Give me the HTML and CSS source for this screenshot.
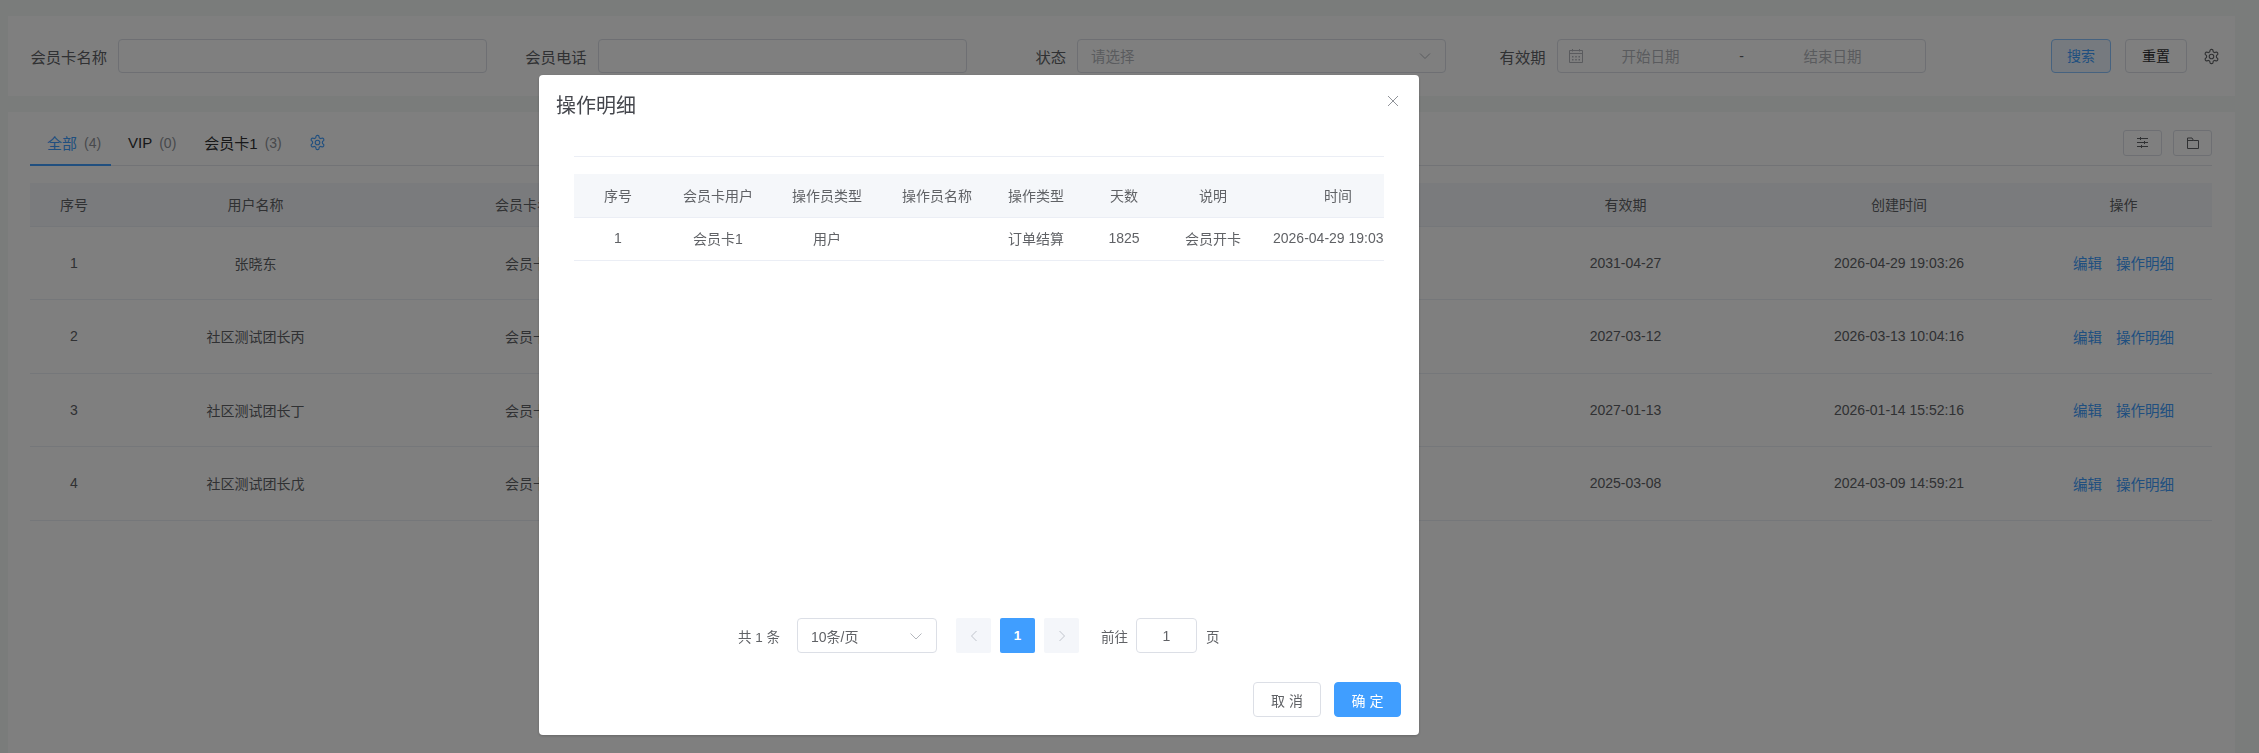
FILE: index.html
```html
<!DOCTYPE html>
<html lang="zh-CN">
<head>
  <meta charset="UTF-8">
  <meta name="viewport" content="width=device-width, initial-scale=1.0">
  <title>会员卡管理</title>
  <link rel="stylesheet" href="styles.css">
</head>
<body>
  <div class="page">
    <form class="card search">
      <div class="field">
        <label class="field-label">会员卡名称</label>
        <div class="input"></div>
      </div>
      <div class="field">
        <label class="field-label">会员电话</label>
        <div class="input"></div>
      </div>
      <div class="field">
        <label class="field-label">状态</label>
        <div class="input select">
          <span class="placeholder">请选择</span>
          <svg class="arrow" width="14" height="14" viewBox="0 0 14 14"><path d="M2 4.500l5 5 5-5" fill="none" stroke="currentColor"/></svg>
        </div>
      </div>
      <div class="field">
        <label class="field-label">有效期</label>
        <div class="input date">
          <svg class="date-icon" width="14" height="14" viewBox="0 0 14 14"><path d="M.5 1.500h13v12H.5zM.5 4.500h13M3.500 0v2.500M10.500 0v2.500" fill="none" stroke="currentColor"/><path d="M3 7h1.500v1.500H3zM6.250 7h1.500v1.500h-1.500zM9.500 7H11v1.500H9.500zM3 10h1.500v1.500H3zM6.250 10h1.500v1.500h-1.500zM9.500 10H11v1.500H9.500z" fill="currentColor"/></svg>
          <span class="placeholder date-part date-start">开始日期</span>
          <span class="date-dash">-</span>
          <span class="placeholder date-part">结束日期</span>
        </div>
      </div>
      <div class="search-actions">
        <button type="button" class="btn btn-search">搜索</button>
        <button type="button" class="btn btn-reset">重置</button>
        <svg class="gear gear-dark" width="17" height="17" viewBox="0 0 24 24"><path d="M12.220 2h-.44a2 2 0 0 0-2 2v.18a2 2 0 0 1-1 1.730l-.43.25a2 2 0 0 1-2 0l-.15-.08a2 2 0 0 0-2.730.73l-.22.38a2 2 0 0 0 .73 2.730l.15.1a2 2 0 0 1 1 1.720v.51a2 2 0 0 1-1 1.740l-.15.09a2 2 0 0 0-.73 2.730l.22.38a2 2 0 0 0 2.730.73l.15-.08a2 2 0 0 1 2 0l.43.25a2 2 0 0 1 1 1.730V20a2 2 0 0 0 2 2h.44a2 2 0 0 0 2-2v-.18a2 2 0 0 1 1-1.730l.43-.25a2 2 0 0 1 2 0l.15.08a2 2 0 0 0 2.730-.73l.22-.39a2 2 0 0 0-.73-2.730l-.15-.08a2 2 0 0 1-1-1.740v-.5a2 2 0 0 1 1-1.740l.15-.09a2 2 0 0 0 .73-2.730l-.22-.38a2 2 0 0 0-2.730-.73l-.15.08a2 2 0 0 1-2 0l-.43-.25a2 2 0 0 1-1-1.730V4a2 2 0 0 0-2-2z" fill="none" stroke="currentColor" stroke-width="1.600"/><circle cx="12" cy="12" r="3.200" fill="none" stroke="currentColor" stroke-width="1.600"/></svg>
      </div>
    </form>

    <div class="card list">
      <div class="tabs-bar">
        <a class="tab active">全部<span class="count">(4)</span></a>
        <a class="tab">VIP<span class="count">(0)</span></a>
        <a class="tab">会员卡1<span class="count">(3)</span></a>
        <svg class="gear gear-blue" width="17" height="17" viewBox="0 0 24 24"><path d="M12.220 2h-.44a2 2 0 0 0-2 2v.18a2 2 0 0 1-1 1.730l-.43.25a2 2 0 0 1-2 0l-.15-.08a2 2 0 0 0-2.730.73l-.22.38a2 2 0 0 0 .73 2.730l.15.1a2 2 0 0 1 1 1.720v.51a2 2 0 0 1-1 1.740l-.15.09a2 2 0 0 0-.73 2.730l.22.38a2 2 0 0 0 2.730.73l.15-.08a2 2 0 0 1 2 0l.43.25a2 2 0 0 1 1 1.730V20a2 2 0 0 0 2 2h.44a2 2 0 0 0 2-2v-.18a2 2 0 0 1 1-1.730l.43-.25a2 2 0 0 1 2 0l.15.08a2 2 0 0 0 2.730-.73l.22-.39a2 2 0 0 0-.73-2.730l-.15-.08a2 2 0 0 1-1-1.740v-.5a2 2 0 0 1 1-1.740l.15-.09a2 2 0 0 0 .73-2.730l-.22-.38a2 2 0 0 0-2.730-.73l-.15.08a2 2 0 0 1-2 0l-.43-.25a2 2 0 0 1-1-1.730V4a2 2 0 0 0-2-2z" fill="none" stroke="currentColor" stroke-width="1.600"/><circle cx="12" cy="12" r="3.200" fill="none" stroke="currentColor" stroke-width="1.600"/></svg>
        <div class="tools">
          <button type="button" class="tool">
            <svg width="11" height="11" viewBox="0 0 11 11"><path d="M0 1.500h11M0 5.500h11M0 9.500h11M3.500 0v3M7.500 4v3M4.500 8v3" fill="none" stroke="currentColor"/></svg>
          </button>
          <button type="button" class="tool">
            <svg width="12" height="12" viewBox="0 0 12 12"><path d="M.5 1h4.500l1.500 2.500h5v8H.5zM.5 3.500h6" fill="none" stroke="currentColor"/></svg>
          </button>
        </div>
      </div>

      <table class="table main-table">
        <colgroup>
          <col class="c-no"><col class="c-user"><col class="c-card"><col class="c-hidden"><col class="c-valid"><col class="c-created"><col class="c-op">
        </colgroup>
        <thead>
          <tr><th>序号</th><th>用户名称</th><th>会员卡名称</th><th></th><th>有效期</th><th>创建时间</th><th>操作</th></tr>
        </thead>
        <tbody>
          <tr><td>1</td><td>张晓东</td><td>会员卡1</td><td></td><td>2031-04-27</td><td>2026-04-29 19:03:26</td><td><a class="link">编辑</a><a class="link">操作明细</a></td></tr>
          <tr><td>2</td><td>社区测试团长丙</td><td>会员卡1</td><td></td><td>2027-03-12</td><td>2026-03-13 10:04:16</td><td><a class="link">编辑</a><a class="link">操作明细</a></td></tr>
          <tr><td>3</td><td>社区测试团长丁</td><td>会员卡1</td><td></td><td>2027-01-13</td><td>2026-01-14 15:52:16</td><td><a class="link">编辑</a><a class="link">操作明细</a></td></tr>
          <tr><td>4</td><td>社区测试团长戊</td><td>会员卡1</td><td></td><td>2025-03-08</td><td>2024-03-09 14:59:21</td><td><a class="link">编辑</a><a class="link">操作明细</a></td></tr>
        </tbody>
      </table>
    </div>
  </div>

  <div class="mask"></div>

  <div class="dialog">
    <div class="dialog-header">
      <span class="dialog-title">操作明细</span>
      <svg class="dialog-close" width="12" height="12" viewBox="0 0 12 12"><path d="M1 1l10 10M11 1L1 11" stroke="currentColor" fill="none"/></svg>
    </div>
    <div class="dialog-body">
      <div class="table-wrap">
        <table class="table detail-table">
          <colgroup>
            <col class="d-no"><col class="d-user"><col class="d-optype"><col class="d-opname"><col class="d-type"><col class="d-days"><col class="d-note"><col class="d-time">
          </colgroup>
          <thead>
            <tr><th>序号</th><th>会员卡用户</th><th>操作员类型</th><th>操作员名称</th><th>操作类型</th><th>天数</th><th>说明</th><th>时间</th></tr>
          </thead>
          <tbody>
            <tr><td>1</td><td>会员卡1</td><td>用户</td><td></td><td>订单结算</td><td>1825</td><td>会员开卡</td><td>2026-04-29 19:03:26</td></tr>
          </tbody>
        </table>
      </div>
      <div class="pager">
        <span class="pager-total">共 1 条</span>
        <div class="pager-size">
          <span>10条/页</span>
          <svg width="14" height="14" viewBox="0 0 14 14"><path d="M1.500 4.500l5.500 5.500 5.500-5.500" fill="none" stroke="currentColor"/></svg>
        </div>
        <span class="page-btn"><svg width="8" height="12" viewBox="0 0 8 12"><path d="M6.500 1l-5 5 5 5" fill="none" stroke="currentColor"/></svg></span>
        <span class="page-btn current">1</span>
        <span class="page-btn"><svg width="8" height="12" viewBox="0 0 8 12"><path d="M1.500 1l5 5-5 5" fill="none" stroke="currentColor"/></svg></span>
        <span class="pager-goto">前往</span>
        <span class="pager-input">1</span>
        <span>页</span>
      </div>
    </div>
    <div class="dialog-footer">
      <button type="button" class="dlg-btn">取 消</button>
      <button type="button" class="dlg-btn primary">确 定</button>
    </div>
  </div>
</body>
</html>
```

FILE: styles.css
```css
* {
  box-sizing: border-box;
}
html, body {
  height: 100%;
}
body {
  margin: 0;
  overflow: hidden;
  font-family: "Liberation Sans", "Noto Sans CJK SC", sans-serif;
  font-size: 14px;
  color: #606266;
  background: #f5f8f6;
}
.page {
  display: flex;
  flex-direction: column;
  padding: 16px 24px 0 8px;
  height: 100%;
  overflow: hidden;
}
.card {
  background: #fff;
}

/* search bar */
.search {
  display: flex;
  align-items: center;
  flex: none;
  height: 80px;
  padding: 0 15px 0 22px;
  gap: 22.500px;
}
.field {
  display: flex;
  align-items: center;
  gap: 11px;
}
.field-label {
  width: 77px;
  padding-bottom: 1px;
  text-align: right;
  font-size: 15.300px;
  white-space: nowrap;
  color: #606266;
}
.input {
  width: 369px;
  height: 34px;
  border: 1px solid #dcdfe6;
  border-radius: 4px;
  display: flex;
  align-items: center;
}
.placeholder {
  padding-bottom: 2px;
  color: #b4b7bd;
  font-size: 14.500px;
}
.select {
  justify-content: space-between;
  padding: 0 13px;
}
.arrow {
  color: #b4b7bd;
}
.date {
  padding: 0 11px;
  color: #606266;
}
.date-icon {
  flex: none;
  color: #b4b7bd;
}
.date-part {
  width: 120px;
  text-align: center;
}
.date-start {
  margin-left: 8px;
}
.date-dash {
  width: 62px;
  text-align: center;
}
.search-actions {
  margin-left: auto;
  display: flex;
  align-items: center;
  gap: 14px;
}
.btn {
  height: 34px;
  padding: 0 0 2px;
  font: inherit;
  color: #303133;
  background: #fff;
  border: 1px solid #dcdfe6;
  border-radius: 4px;
}
.btn-search {
  width: 60px;
  color: #409eff;
  background: #ecf5ff;
  border-color: #8cc5ff;
}
.btn-reset {
  width: 62px;
}
.gear {
  display: block;
  flex: none;
}
.gear-dark {
  color: #606266;
  margin-left: 2px;
}
.gear-blue {
  color: #409eff;
  margin-left: 16px;
}

/* tabs */
.list {
  flex: 1;
  margin-top: 16px;
  padding: 0 23px 0 22px;
}
.tabs-bar {
  display: flex;
  align-items: center;
  height: 54px;
  padding-top: 8px;
  border-bottom: 1px solid #e4e7ed;
}
.tab {
  height: 100%;
  display: flex;
  align-items: center;
  padding: 0 11px 0 17px;
  font-size: 15px;
  color: #303133;
  white-space: nowrap;
  position: relative;
}
.tab.active {
  color: #409eff;
  width: 81px;
}
.tab.active::after {
  content: "";
  position: absolute;
  left: 0;
  right: 0;
  bottom: -1px;
  height: 2px;
  background: #409eff;
}
.count {
  margin-left: 7px;
  font-size: 14px;
  color: #909399;
}
.tools {
  margin-left: auto;
  display: flex;
  gap: 11px;
}
.tool {
  width: 39px;
  height: 26px;
  padding: 0;
  display: flex;
  align-items: center;
  justify-content: center;
  color: #606266;
  background: #fff;
  border: 1px solid #dcdfe6;
  border-radius: 3px;
}

/* tables */
.table {
  border-collapse: collapse;
  table-layout: fixed;
  text-align: center;
}
.table th {
  font-weight: 400;
  color: #606266;
  background: #f5f7fa;
  padding: 0;
  border-bottom: 1px solid #ebeef5;
}
.table td {
  padding: 0;
  color: #606266;
  border-bottom: 1px solid #ebeef5;
  white-space: nowrap;
}
.main-table {
  width: 2182px;
  margin-top: 17px;
}
.main-table th {
  height: 43px;
}
.main-table td {
  height: 73.500px;
}
.c-no { width: 88px; }
.c-user { width: 275px; }
.c-card { width: 274px; }
.c-hidden { width: 821px; }
.c-valid { width: 275px; }
.c-created { width: 272px; }
.c-op { width: 177px; }
.link {
  color: #409eff;
  font-size: 14.500px;
  margin: 0 7px;
}

/* dialog */
.mask {
  position: fixed;
  inset: 0;
  background: rgba(0, 0, 0, .5);
}
.dialog {
  position: fixed;
  left: 539px;
  top: 75px;
  width: 880px;
  height: 660px;
  background: #fff;
  border-radius: 4px;
  box-shadow: 0 1px 3px rgba(0, 0, 0, .2);
  display: flex;
  flex-direction: column;
}
.dialog-header {
  display: flex;
  justify-content: space-between;
  padding: 19px 20px 0 17px;
  height: 81px;
}
.dialog-title {
  font-size: 20px;
  line-height: 24px;
  color: #45474d;
}
.dialog-close {
  margin-top: 1px;
  color: #909399;
}
.dialog-body {
  flex: 1;
  display: flex;
  flex-direction: column;
  padding: 0 35px;
}
.table-wrap {
  overflow: hidden;
  border-top: 1px solid #ebeef5;
  padding-top: 17px;
}
.detail-table {
  width: 846px;
}
.detail-table th {
  height: 43px;
}
.detail-table td {
  height: 43px;
  padding-bottom: 2px;
}
.d-no { width: 88px; }
.d-user { width: 112px; }
.d-optype { width: 106px; }
.d-opname { width: 114px; }
.d-type { width: 84px; }
.d-days { width: 92px; }
.d-note { width: 86px; }
.d-time { width: 164px; }

/* pagination */
.pager {
  margin-top: auto;
  display: flex;
  align-items: center;
  height: 35px;
  padding-left: 164px;
  font-size: 13.500px;
}
.pager-total {
  width: 59px;
}
.pager-size {
  width: 140px;
  height: 35px;
  margin-right: 19px;
  padding: 0 13px;
  display: flex;
  align-items: center;
  justify-content: space-between;
  font-size: 14px;
  border: 1px solid #dcdfe6;
  border-radius: 4px;
}
.pager-size svg {
  color: #b4b7bd;
}
.page-btn {
  width: 35px;
  height: 35px;
  margin-right: 9px;
  display: flex;
  align-items: center;
  justify-content: center;
  color: #c0c4cc;
  background: #f4f6fa;
  border-radius: 2px;
}
.page-btn.current {
  color: #fff;
  background: #409eff;
  font-weight: 700;
}
.pager-goto {
  margin-left: 13px;
  margin-right: 8px;
}
.pager-input {
  width: 61px;
  height: 35px;
  margin-right: 9px;
  display: flex;
  align-items: center;
  justify-content: center;
  font-size: 14px;
  border: 1px solid #dcdfe6;
  border-radius: 4px;
}
.dialog-footer {
  display: flex;
  justify-content: flex-end;
  gap: 13px;
  padding: 29px 18px 18px 0;
}
.dlg-btn {
  width: 68px;
  height: 35px;
  padding: 0;
  font: inherit;
  font-size: 14px;
  color: #606266;
  background: #fff;
  border: 1px solid #dcdfe6;
  border-radius: 4px;
}
.dlg-btn.primary {
  width: 67px;
  color: #fff;
  background: #409eff;
  border-color: #409eff;
}
```
